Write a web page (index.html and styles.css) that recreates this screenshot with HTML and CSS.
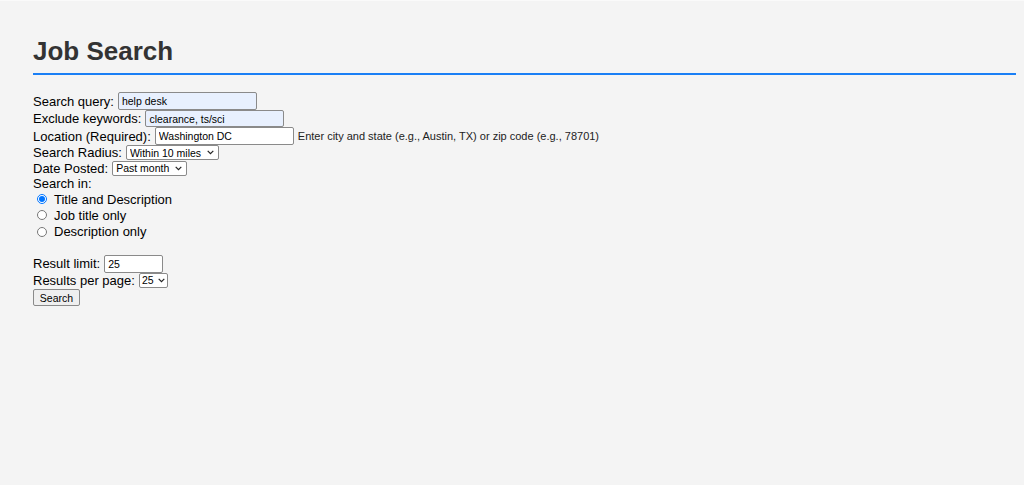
FILE: index.html
```html
<!DOCTYPE html>
<html lang="en">
<head>
<meta charset="utf-8">
<title>Job Search</title>
<link rel="stylesheet" href="styles.css">
</head>
<body>
<div class="page">
  <h1 class="title">Job Search</h1>
  <form class="form">
    <div class="row r1"><label class="lbl">Search query:</label><input class="txt autofill" type="text" value="help desk"></div>
    <div class="row r2"><label class="lbl">Exclude keywords:</label><input class="txt autofill" type="text" value="clearance, ts/sci"></div>
    <div class="row r3"><label class="lbl">Location (Required):</label><input class="txt" type="text" value="Washington DC"><span class="hint">Enter city and state (e.g., Austin, TX) or zip code (e.g., 78701)</span></div>
    <div class="row r4"><label class="lbl">Search Radius:</label><span class="selwrap"><select class="sel"><option>Within 10 miles</option></select><svg class="chev" width="7" height="5" viewBox="0 0 7 5"><path d="M0.7 0.9 L3.5 3.7 L6.3 0.9" fill="none" stroke="#222" stroke-width="1.2"/></svg></span></div>
    <div class="row r5"><label class="lbl">Date Posted:</label><span class="selwrap"><select class="sel"><option>Past month</option></select><svg class="chev" width="7" height="5" viewBox="0 0 7 5"><path d="M0.7 0.9 L3.5 3.7 L6.3 0.9" fill="none" stroke="#222" stroke-width="1.2"/></svg></span></div>
    <div class="row r6"><span class="lbl">Search in:</span></div>
    <div class="row r7"><input class="radio" type="radio" name="in" checked><span class="rlbl">Title and Description</span></div>
    <div class="row r8"><input class="radio" type="radio" name="in"><span class="rlbl">Job title only</span></div>
    <div class="row r9"><input class="radio" type="radio" name="in"><span class="rlbl">Description only</span></div>
    <div class="row blank"></div>
    <div class="row r10"><label class="lbl">Result limit:</label><input class="txt num" type="text" value="25"></div>
    <div class="row r11"><label class="lbl">Results per page:</label><span class="selwrap"><select class="sel small"><option>25</option></select><svg class="chev" width="7" height="5" viewBox="0 0 7 5"><path d="M0.7 0.9 L3.5 3.7 L6.3 0.9" fill="none" stroke="#222" stroke-width="1.2"/></svg></span></div>
    <div class="row r12"><button class="btn" type="button">Search</button></div>
  </form>
</div>
</body>
</html>
```

FILE: styles.css
```css
html, body {
  margin: 0;
  padding: 0;
}
body {
  background: #f4f4f4;
  border-top: 1px solid #fafafa;
  font-family: "Liberation Sans", Arial, sans-serif;
  font-size: 13px;
  color: #000;
  height: 484px;
}
.page {
  padding: 35px 8px 0 33px;
}
.title {
  margin: 0;
  font-size: 26px;
  font-weight: bold;
  color: #333;
  line-height: 30px;
  padding-bottom: 7px;
  border-bottom: 2px solid #1a7ff5;
}
.form {
  margin-top: 17px;
}
.row {
  display: flex;
  align-items: center;
  white-space: nowrap;
}
.r1 { height: 18px; }
.r2 { height: 17px; }
.r3 { height: 18px; }
.r4 { height: 15px; }
.r5 { height: 16px; }
.r6 { height: 15px; }
.r7 { height: 16px; }
.r8 { height: 16px; }
.r9 { height: 17px; }
.blank { height: 15px; }
.r10 { height: 17px; }
.r11 { height: 16px; }
.r12 { height: 17px; margin-top: 1px; }
.lbl {
  margin-right: 4px;
}
.txt {
  box-sizing: border-box;
  width: 139px;
  height: 18px;
  margin: 0;
  padding: 0 3px;
  border: 1px solid #8a8a8a;
  border-radius: 2px;
  background: #fff;
  font-family: "Liberation Sans", Arial, sans-serif;
  font-size: 10.5px;
  color: #000;
}
.r2 .txt { height: 17px; }
.autofill {
  background: #e8f0fe;
}
.num {
  width: 59px;
}
.hint {
  margin-left: 4px;
  font-size: 11px;
  color: #222;
}
.selwrap {
  position: relative;
  display: inline-flex;
  align-items: center;
}
.sel {
  -webkit-appearance: none;
  appearance: none;
  box-sizing: border-box;
  margin: 0;
  font-family: "Liberation Sans", Arial, sans-serif;
  font-size: 10.5px;
  line-height: 12px;
  height: 15px;
  padding: 0 16px 0 3px;
  border: 1px solid #8a8a8a;
  border-radius: 2px;
  background: #fff;
  color: #000;
}
.sel.small {
  padding: 0 13px 0 2px;
}
.chev {
  position: absolute;
  right: 5px;
  top: 5px;
  pointer-events: none;
}
.small + .chev {
  right: 3px;
}
.radio {
  width: 10px;
  height: 10px;
  margin: 0 0 0 4px;
}
.rlbl {
  margin-left: 7px;
}
.btn {
  box-sizing: border-box;
  height: 17px;
  width: 47px;
  margin: 0;
  padding: 0;
  border: 1px solid #8a8a8a;
  border-radius: 2px;
  background: #efefef;
  font-family: "Liberation Sans", Arial, sans-serif;
  font-size: 10.5px;
  color: #000;
}
```
